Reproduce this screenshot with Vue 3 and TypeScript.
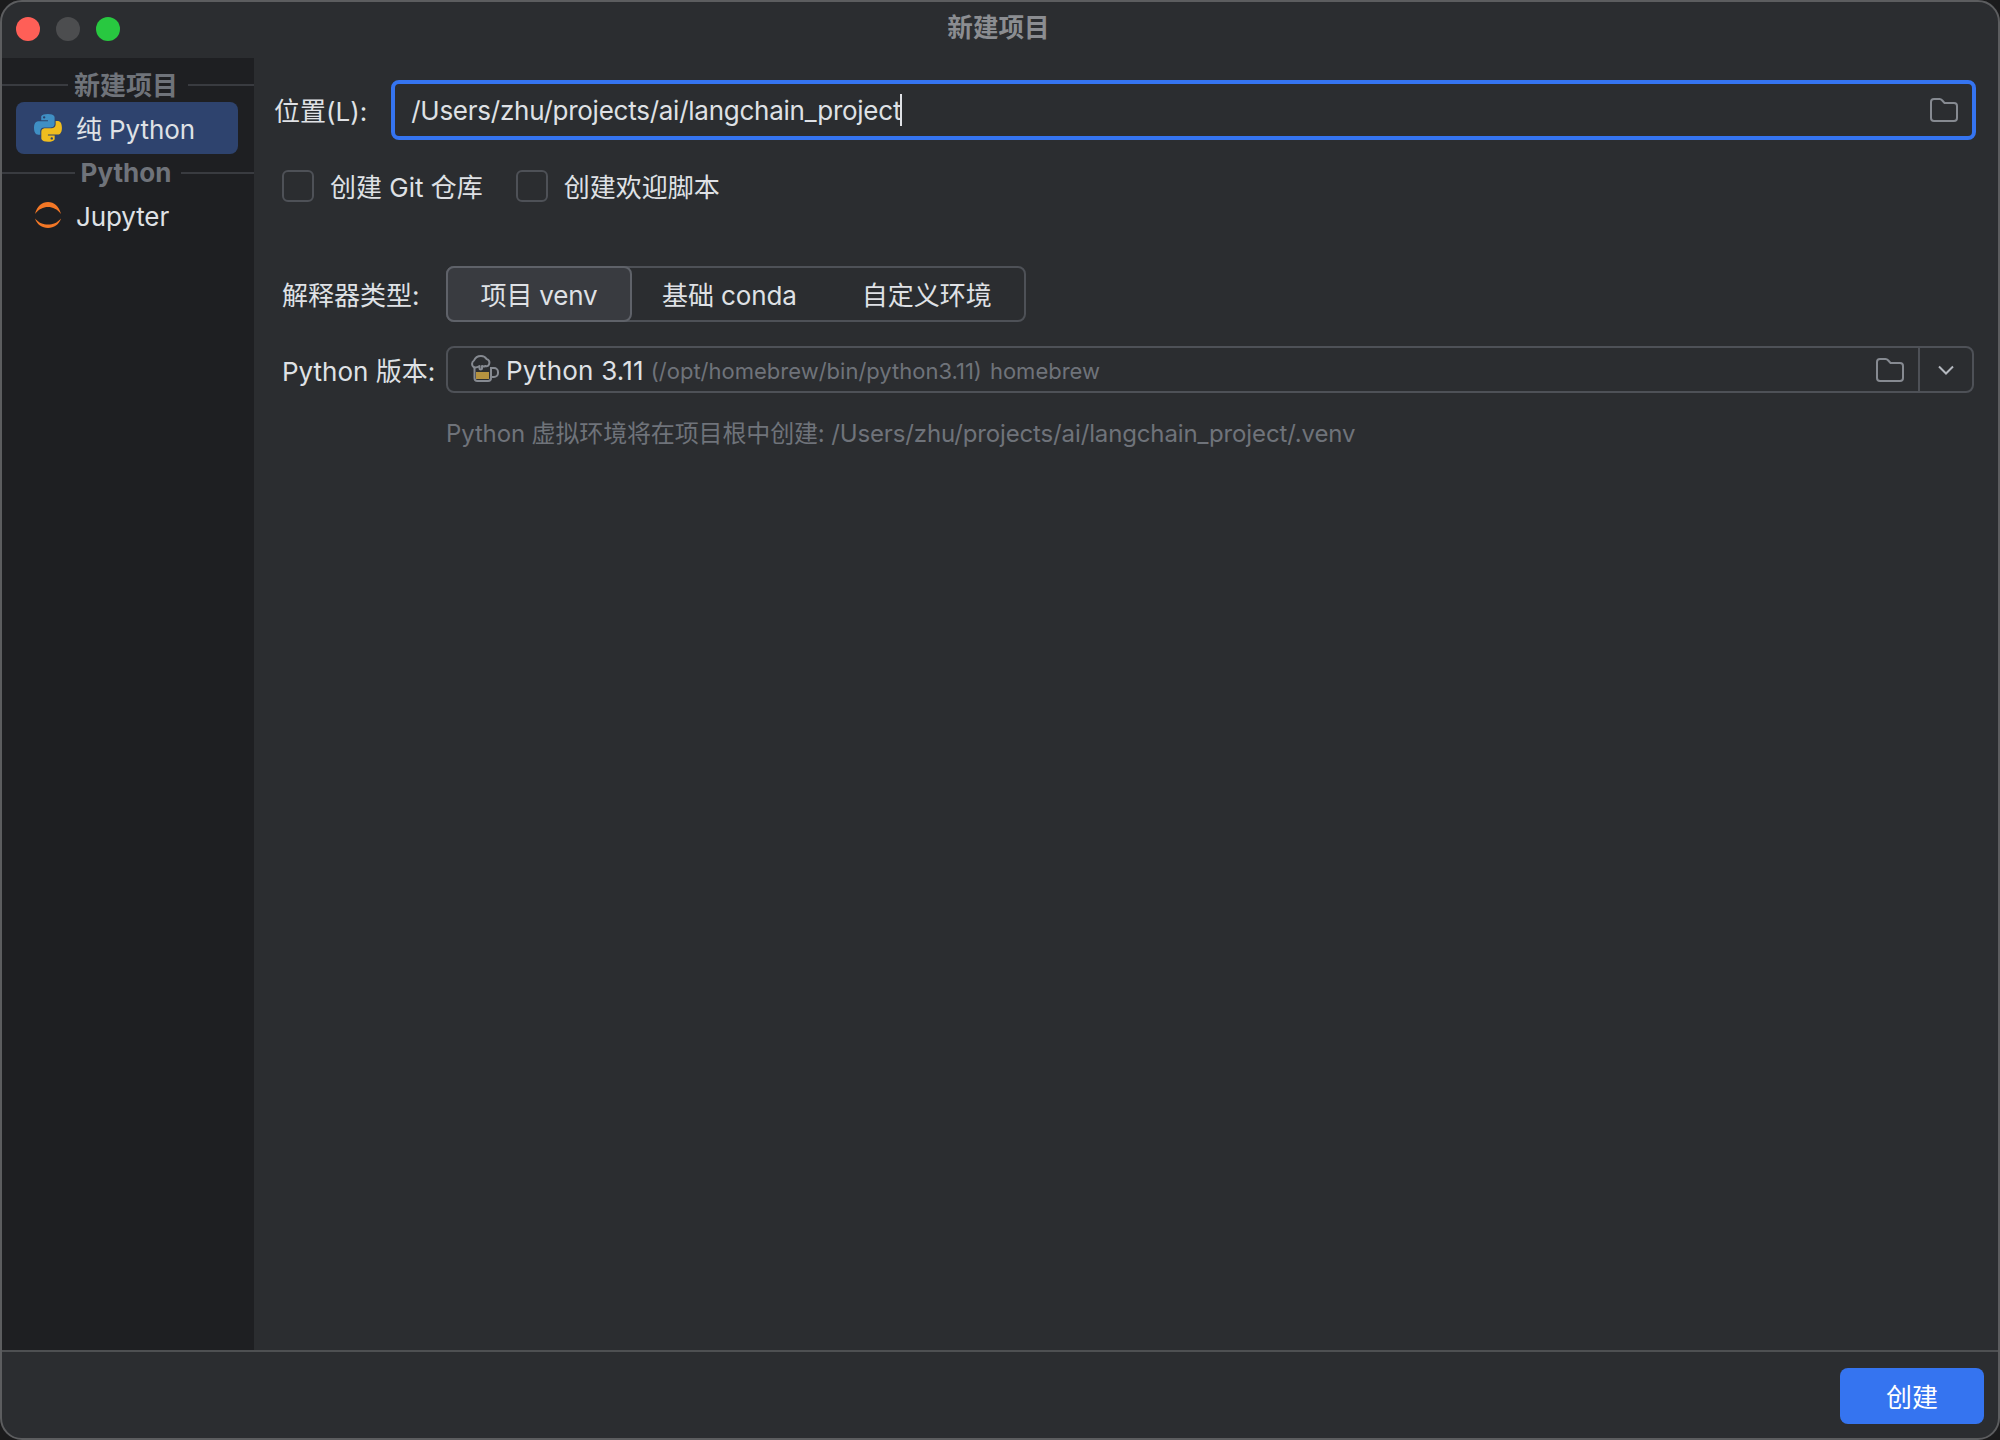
<script setup lang="ts">
const hint = 'Python 虚拟环境将在项目根中创建: /Users/zhu/projects/ai/langchain_project/.venv'
const tabs = ['基础 conda', '自定义环境']
</script>

<template>
  <div class="window">
    <header class="titlebar">
      <div class="lights">
        <span class="light red"></span>
        <span class="light gray"></span>
        <span class="light green"></span>
      </div>
      <div class="title">新建项目</div>
      <div></div>
    </header>

    <div class="body">
      <aside class="sidebar">
        <div class="group first"><span>新建项目</span></div>
        <div class="item selected">
          <svg class="ico" viewBox="0 0 111 111">
            <path fill="#3f8fc4" d="M54.9 0C26.8 0 28.6 12.2 28.6 12.2l0 12.6h26.8v3.8H17.9S0 26.6 0 54.9c0 28.3 15.6 27.3 15.6 27.3h9.3V69s-.5-15.6 15.4-15.6h26.5s14.9.2 14.9-14.4V14.8S84 0 54.9 0zM40.2 8.5a4.8 4.8 0 1 1 0 9.6 4.8 4.8 0 0 1 0-9.6z" />
            <path fill="#f0bd1f" d="M55.7 110c28.1 0 26.3-12.2 26.3-12.2l0-12.6H55.2v-3.8h37.5S110.7 83.4 110.7 55.1c0-28.3-15.6-27.3-15.6-27.3h-9.3V41s.5 15.6-15.4 15.6H43.9S29 56.4 29 71v24.2S26.7 110 55.7 110zm14.7-8.5a4.8 4.8 0 1 1 0-9.6 4.8 4.8 0 0 1 0 9.6z" />
          </svg>
          <span class="item-text">纯 Python</span>
        </div>
        <div class="group"><span>Python</span></div>
        <div class="item">
          <svg class="ico jupyter" viewBox="0 0 28 28">
            <path fill="#f37726" d="M1 12C3 4 8 0 14 0s11 4 13 12C23 7 19 5 14 5S5 7 1 12Z" />
            <path fill="#f37726" d="M1 16.500C3 22.500 8 26 14 26s11-3.500 13-9.500C23 21 19 22.500 14 22.500S5 21 1 16.500Z" />
          </svg>
          <span class="item-text">Jupyter</span>
        </div>
      </aside>

      <main class="content">
        <div class="location-row">
          <label class="location-label">位置(L):</label>
          <div class="location-input">
            <span class="path">/Users/zhu/projects/ai/langchain_project</span><span class="caret"></span>
            <svg class="folder push" viewBox="0 0 28 24">
              <path d="M1 4a3 3 0 0 1 3-3h5.500c1.200 0 2 .6 2.800 1.500L14.500 5H24a3 3 0 0 1 3 3v12a3 3 0 0 1-3 3H4a3 3 0 0 1-3-3Z" />
            </svg>
          </div>
        </div>

        <div class="check-row">
          <div class="check"><span class="box"></span><span class="check-text">创建 Git 仓库</span></div>
          <div class="check"><span class="box"></span><span class="check-text">创建欢迎脚本</span></div>
        </div>

        <div class="form-row type-row">
          <span class="form-label lifted">解释器类型:</span>
          <div class="segments">
            <div class="segment active">项目 venv</div>
            <div v-for="t in tabs" :key="t" class="segment">{{ t }}</div>
          </div>
        </div>

        <div class="form-row version-row">
          <span class="form-label">Python 版本:</span>
          <div class="combo">
            <div class="combo-main">
              <svg class="beer" viewBox="0 0 28 28">
                <path fill="#b5923f" d="M5 17h13v7H5Z" />
                <path fill="none" stroke="#868a91" stroke-width="2" d="M3.500 11v12a3 3 0 0 0 3 3H17a3 3 0 0 0 3-3V12" />
                <path fill="none" stroke="#868a91" stroke-width="2" d="M20 13h3a4 4 0 0 1 4 4v1a4 4 0 0 1-4 4h-3" />
                <path fill="#2b2d30" stroke="#868a91" stroke-width="2" stroke-linejoin="round" d="M2.500 12c-2-1.500-2-5 .5-6.500C4 3 7 1 10 1c2.500 0 4.500 1.200 5.500 3 2.500.5 3.500 3 2.500 5.500-.8 1.500-2.500 2-3.500 1.500-1 .5-2.500.5-3.500 0v2.500c0 1.200-2.500 1.200-2.500 0V11c-1.500 1-4.500 1.800-6 1Z" />
              </svg>
              <span class="ver">Python 3.11</span>
              <span class="sub">(/opt/homebrew/bin/python3.11)</span>
              <span class="sub">homebrew</span>
              <svg class="folder push" viewBox="0 0 28 24">
                <path d="M1 4a3 3 0 0 1 3-3h5.500c1.200 0 2 .6 2.800 1.500L14.500 5H24a3 3 0 0 1 3 3v12a3 3 0 0 1-3 3H4a3 3 0 0 1-3-3Z" />
              </svg>
            </div>
            <div class="combo-arrow">
              <svg viewBox="0 0 16 10" class="chev"><path d="M1 1.500l7 7 7-7" /></svg>
            </div>
          </div>
        </div>

        <div class="hint">{{ hint }}</div>
      </main>
    </div>

    <footer class="footer">
      <button class="create">创建</button>
    </footer>
  </div>
</template>

<style>
html, body { margin: 0; background: #1b1b1c; }
</style>

<style scoped>
.window {
  box-sizing: border-box;
  width: 2000px;
  height: 1440px;
  display: flex;
  flex-direction: column;
  background: #2b2d30;
  border: 2px solid #5c5d5f;
  border-radius: 22px;
  overflow: hidden;
  color: #dfe1e5;
  font-family: Inter, "Noto Sans CJK SC", sans-serif;
  font-size: 26px;
}
.titlebar {
  flex: 0 0 56px;
  display: grid;
  grid-template-columns: 1fr auto 1fr;
  align-items: center;
  padding-left: 14px;
}
.lights { display: flex; gap: 16px; margin-top: -3px; }
.light { width: 24px; height: 24px; border-radius: 50%; }
.red { background: #ff5f57; }
.gray { background: #4c4d4f; }
.green { background: #28c840; }
.title { font-size: 25.600px; font-weight: 700; color: #8b8d91; margin-top: -10px; margin-left: -17px; }

.body { flex: 1; display: flex; min-height: 0; }
.sidebar {
  flex: 0 0 252px;
  background: #1e1f22;
  display: flex;
  flex-direction: column;
}
.group {
  display: flex;
  align-items: center;
  gap: 8px;
  height: 34px;
  font-size: 26px;
  font-weight: 700;
  color: #6f737a;
  margin-top: 2px;
}
.group span { margin: 0 2px 0 -2px; padding-bottom: 2px; }
.group.first { margin-top: 10px; margin-bottom: 0; }
.group.first span { padding-bottom: 4px; }
.group::before, .group::after {
  content: "";
  flex: 1;
  height: 2px;
  background: #393b40;
}
.item {
  height: 52px;
  margin: 0 16px 0 14px;
  display: flex;
  align-items: center;
  gap: 14px;
  padding-left: 18px;
  border-radius: 8px;
}
.item.selected { background: #2e436e; }
.group + .item:not(.selected) { margin-top: 1px; }
.item-text { padding-bottom: 2px; letter-spacing: -0.1px; }
.ico { width: 28px; height: 28px; flex: none; }
.jupyter { margin-bottom: 2px; }

.content { flex: 1; min-width: 0; padding: 22px 22px 0 20px; }
.location-row { display: flex; align-items: center; gap: 24px; }
.location-label { padding-bottom: 2px; }
.location-input {
  flex: 1;
  box-sizing: border-box;
  height: 60px;
  display: flex;
  align-items: center;
  border: 4px solid #3574f0;
  border-radius: 8px;
  padding: 0 14px 0 16px;
}
.path { white-space: nowrap; letter-spacing: -0.25px; }
.caret { width: 2px; height: 32px; background: #dfe1e5; margin-left: -1px; }
.folder { width: 28px; height: 24px; flex: none; fill: none; stroke: #868a91; stroke-width: 2; }
.push { margin-left: auto; }

.check-row { display: flex; gap: 33px; margin: 30px 0 0 8px; }
.check { display: flex; align-items: center; gap: 16px; height: 32px; }
.check-text { padding-bottom: 2px; }
.box {
  box-sizing: border-box;
  width: 32px;
  height: 32px;
  border: 2px solid #4e5157;
  border-radius: 6px;
}

.form-row { display: flex; align-items: center; margin-left: 8px; }
.form-label { flex: 0 0 164px; white-space: nowrap; }
.lifted { padding-bottom: 2px; }
.type-row { margin-top: 64px; }
.segments {
  display: flex;
  height: 56px;
  box-sizing: border-box;
  border: 2px solid #4e5157;
  border-radius: 8px;
}
.segment {
  display: flex;
  align-items: center;
  justify-content: center;
  padding: 0 32px 2px;
  white-space: nowrap;
  margin: -2px 0;
}
.segment:nth-child(2) { padding-left: 30px; padding-right: 33px; letter-spacing: -0.1px; }
.segment.active {
  box-sizing: border-box;
  width: 186px;
  margin-left: -2px;
  padding: 0 0 2px;
  letter-spacing: -0.2px;
  background: #393b40;
  border: 2px solid #5f6269;
  border-radius: 8px;
}
.version-row { margin-top: 24px; }
.combo {
  flex: 1;
  display: flex;
  box-sizing: border-box;
  height: 47px;
  border: 2px solid #4e5157;
  border-radius: 8px;
  margin-right: 2px;
}
.combo-main {
  flex: 1;
  display: flex;
  align-items: center;
  padding: 0 14px 0 23px;
  border-right: 2px solid #4e5157;
}
.beer { width: 28px; height: 28px; flex: none; margin-right: 7px; margin-bottom: 1px; }
.ver { margin-right: 7px; letter-spacing: 0.2px; padding-top: 2px; }
.sub { font-size: 22px; color: #6f737a; margin-right: 8px; white-space: nowrap; padding-top: 3px; }
.combo-arrow { flex: 0 0 52px; display: flex; align-items: center; justify-content: center; }
.chev { width: 16px; height: 10px; fill: none; stroke: #b4b8bf; stroke-width: 2; }
.hint { margin: 21px 0 0 172px; font-size: 24px; color: #6f737a; white-space: nowrap; letter-spacing: -0.14px; }

.footer {
  flex: 0 0 88px;
  box-sizing: border-box;
  border-top: 2px solid #4e5052;
  display: flex;
  justify-content: flex-end;
  padding: 16px 14px 0 0;
}
.create {
  width: 144px;
  height: 56px;
  border: 0;
  border-radius: 8px;
  background: #3574f0;
  color: #fff;
  font-family: inherit;
  font-size: 26px;
  padding: 0 0 2px;
}
</style>
